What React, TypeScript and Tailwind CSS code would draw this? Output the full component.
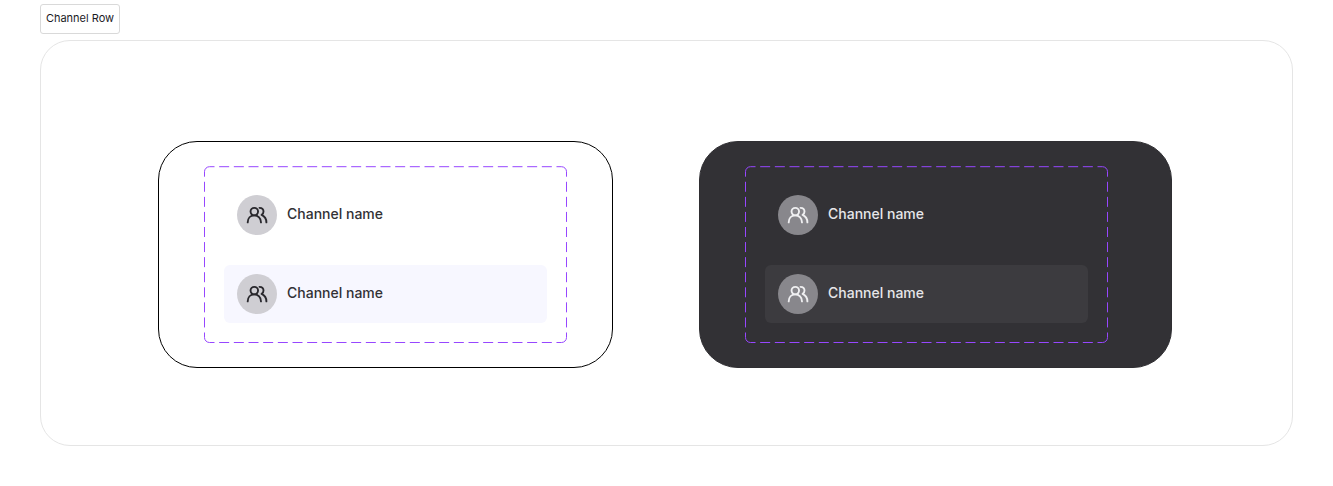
type Theme = "light" | "dark";

const FRAME_W = 363;
const FRAME_H = 177;

function DashedOutline() {
  const l = 0.5;
  const t = 0.7;
  const r = 362.5;
  const b = 176.5;
  const q = 5;
  const horizontal = `10 ${(r - l - 2 * q) / 24 - 10}`;
  const vertical = `10 ${(b - t - 2 * q) / 11 - 10}`;
  return (
    <svg
      className="pointer-events-none absolute inset-0"
      width={FRAME_W}
      height={FRAME_H}
      viewBox={`0 0 ${FRAME_W} ${FRAME_H}`}
      fill="none"
      stroke="#9747ff"
      aria-hidden="true"
    >
      <path d={`M${l} ${t + q}A${q} ${q} 0 0 1 ${l + q} ${t}`} />
      <path d={`M${r - q} ${t}A${q} ${q} 0 0 1 ${r} ${t + q}`} />
      <path d={`M${r} ${b - q}A${q} ${q} 0 0 1 ${r - q} ${b}`} />
      <path d={`M${l + q} ${b}A${q} ${q} 0 0 1 ${l} ${b - q}`} />
      <g strokeDasharray={horizontal} strokeDashoffset={5}>
        <path d={`M${l + q} ${t}H${r - q}`} />
        <path d={`M${l + q} ${b}H${r - q}`} />
      </g>
      <g strokeDasharray={vertical} strokeDashoffset={5}>
        <path d={`M${l} ${t + q}V${b - q}`} />
        <path d={`M${r} ${t + q}V${b - q}`} />
      </g>
    </svg>
  );
}

function GroupIcon() {
  return (
    <svg
      width="24"
      height="24"
      viewBox="0 0 24 24"
      fill="none"
      stroke="currentColor"
      strokeWidth="1.9"
      strokeLinecap="round"
      strokeLinejoin="round"
      aria-hidden="true"
    >
      <circle cx="9.3" cy="8.6" r="3.75" />
      <path d="M2.7 19.4c0-4.1 2.7-7.05 6.6-7.05s6.7 2.95 6.7 7.05" />
      <path d="M14.5 4.85c2.4 0 4 1.6 4 3.75 0 1.4-.7 2.6-1.9 3.3 3 1.4 4.8 4.1 4.8 7.5" />
    </svg>
  );
}

function ChannelRow({ theme, active }: { theme: Theme; active?: boolean }) {
  const dark = theme === "dark";
  const background = active ? (dark ? "bg-[#3c3b3f]" : "bg-[#f7f7ff]") : "";
  return (
    <div className={`flex h-[58px] items-center gap-2.5 rounded-md px-[13px] ${background}`}>
      <div
        className={`flex size-10 items-center justify-center rounded-full ${
          dark ? "bg-[#88878c] text-[#efeff1]" : "bg-[#cfced3] text-[#29282d]"
        }`}
      >
        <GroupIcon />
      </div>
      <span
        className={`pb-0.5 text-sm leading-5 font-medium ${dark ? "text-[#e6e6e9]" : "text-[#323135]"}`}
      >
        Channel name
      </span>
    </div>
  );
}

function Panel({ theme }: { theme: Theme }) {
  return (
    <section
      className={`h-[227px] rounded-[39px] border pt-[24px] pl-[45px] ${
        theme === "dark" ? "w-[473px] border-[#2f2e32] bg-[#323135]" : "w-[455px] border-black bg-white"
      }`}
    >
      <div className="relative flex h-[177px] w-[363px] flex-col gap-[21px] px-5 pt-5">
        <DashedOutline />
        <ChannelRow theme={theme} />
        <ChannelRow theme={theme} active />
      </div>
    </section>
  );
}

export default function App() {
  return (
    <div className="h-[486px] w-[1333px] bg-white px-10 pt-1 font-['Inter',sans-serif]">
      <h1 className="flex h-[30px] w-20 items-center justify-center rounded-[3px] border border-[#d9d9d9] pb-0.5 text-[11px] leading-4 font-normal whitespace-nowrap text-[#1b1b1f]">
        Channel Row
      </h1>
      <main className="mt-1.5 flex h-[406px] w-[1253px] gap-[86px] rounded-[30px] border border-[#e5e5e5] pt-[100px] pl-[117px]">
        <Panel theme="light" />
        <Panel theme="dark" />
      </main>
    </div>
  );
}
